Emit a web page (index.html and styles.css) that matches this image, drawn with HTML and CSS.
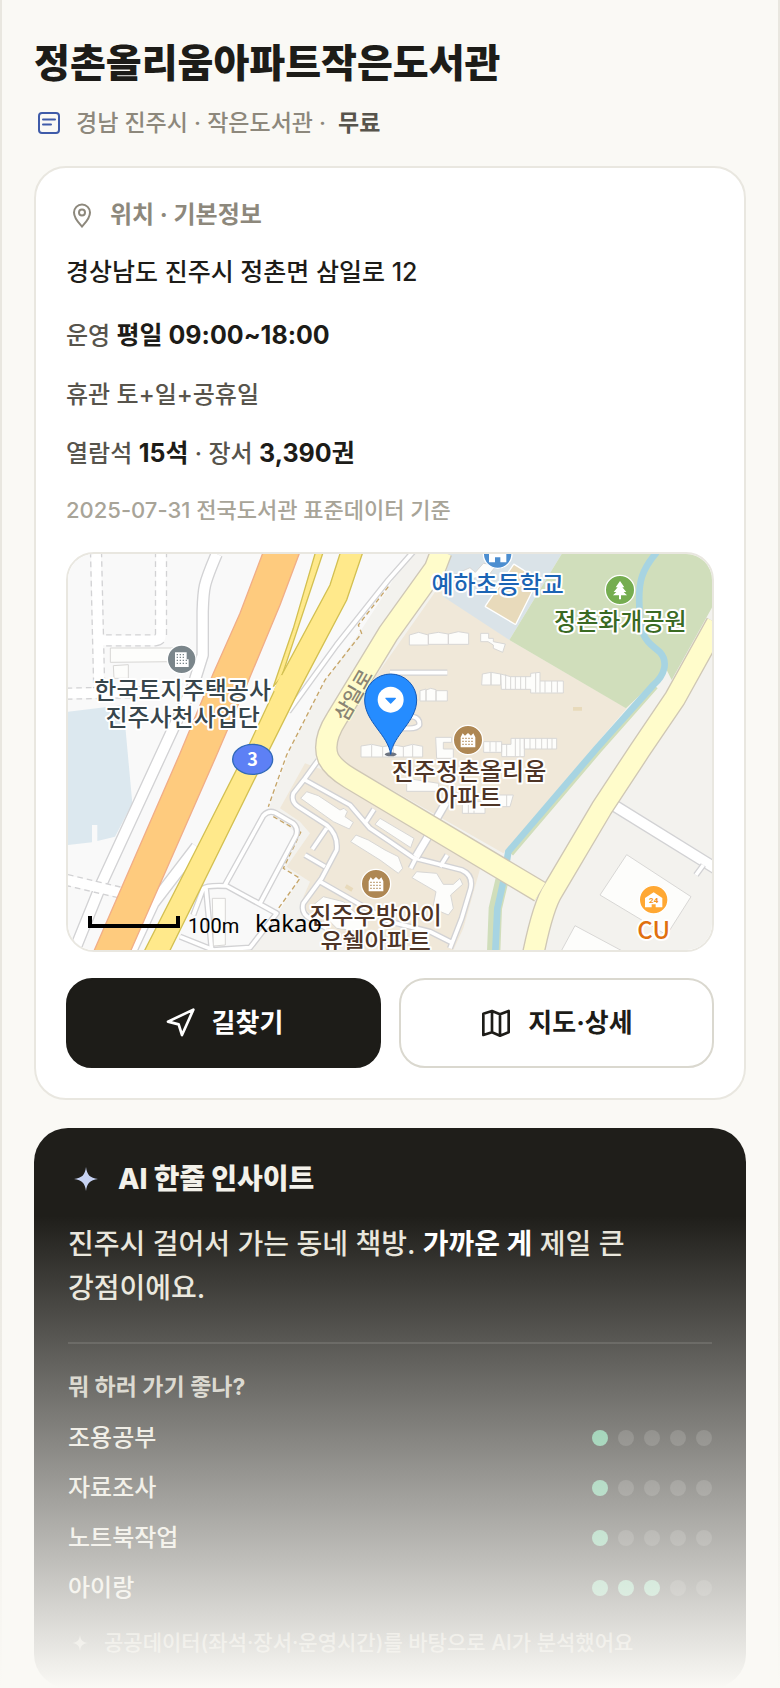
FILE: index.html
```html
<!DOCTYPE html>
<html lang="ko">
<head>
<meta charset="utf-8">
<meta name="viewport" content="width=device-width, initial-scale=1">
<title>정촌올리움아파트작은도서관</title>
<link rel="stylesheet" href="styles.css">
</head>
<body>
<main class="page">
  <header class="intro">
    <h1 class="title">정촌올리움아파트작은도서관</h1>
    <p class="meta">
      <svg class="icon-meta" viewBox="0 0 30 30" aria-hidden="true"><rect x="5" y="5" width="20" height="20" rx="3"/><path d="M9 11.500h12M9 16.500h8"/></svg>
      <span>경남 진주시 · 작은도서관 ·</span>
      <strong class="fee">무료</strong>
    </p>
  </header>

  <section class="card">
    <h2 class="card-heading">
      <svg class="icon-pin" viewBox="0 0 32 32" aria-hidden="true"><path d="M16 27.500C13 24 8 19.500 8 13.500a8 8 0 0 1 16 0c0 6-5 10.500-8 14Z"/><circle cx="16" cy="13.500" r="3"/></svg>
      <span>위치 · 기본정보</span>
    </h2>
    <p class="address">경상남도 진주시 정촌면 삼일로 12</p>
    <p class="fact">운영 <b>평일 09:00~18:00</b></p>
    <p class="fact">휴관 토+일+공휴일</p>
    <p class="fact">열람석 <b>15석</b> · 장서 <b>3,390권</b></p>
    <p class="source">2025-07-31 전국도서관 표준데이터 기준</p>

    <div class="map">
      <svg class="map-art" viewBox="24 27 1932 1188" preserveAspectRatio="xMidYMid slice" role="img" aria-label="도서관 주변 지도">
        <rect class="land" x="24" y="27" width="1932" height="1188"/>
        <path class="land-warm" d="M1040 27H1960V1215H560L650 1110 720 1000 670 970 720 870 640 815 628 785 690 615 800 400 900 260 985 130Z"/>
        <path class="water-flat" d="M24 500 190 480 217 775 165 875 112 888V840H96V892L24 900Z"/>
        <path class="block" d="M1140 120 1348 285 1700 490 1330 925 830 640 830 560Z"/>
        <path class="block" d="M735 655 660 790 720 830 750 865 680 965 750 1010 720 1080 880 1215H1180L1210 1150 1262 965 830 690Z"/>
        <path class="school" d="M1165 27H1505L1348 285 1150 155Z"/>
        <path class="park" d="M1505 27 1348 285 1698 490 1820 375 1835 405 1960 180V27Z"/>
        <path class="bank" d="M1784 422 1614 614 1350 924"/>
        <path class="bank lower" d="M1338 960 1325 1010 1306 1090 1301 1220"/>
        <path class="river" d="M1790 22C1745 75 1735 110 1738 180 1740 290 1765 290 1800 322 1825 350 1815 390 1780 420L1610 610 1345 920 1330 1010 1312 1090 1306 1220"/>

        <g class="field"><path d="M1362 60 1432 104 1366 236 1278 184Z"/></g>

        <g class="street-case wide">
          <path d="M470 27C430 120 430 130 428 200V330L400 420 305 625 125 1015 42 1220"/>
          <path d="M410 905 280 1075 215 1215"/>
          <path d="M1660 780 1970 972"/>
        </g>
        <g class="street wide">
          <path d="M470 27C430 120 430 130 428 200V330L400 420 305 625 125 1015 42 1220"/>
          <path d="M410 905 280 1075 215 1215"/>
          <path d="M1660 780 1970 972"/>
        </g>
        <g class="dash-case">
          <path d="M108 20 118 445M303 20V268Q303 285 286 286H130M20 446 300 440M20 1005 190 1045"/>
        </g>
        <g class="dash-gap">
          <path d="M108 20 118 445M303 20V268Q303 285 286 286H114M20 446 300 440M20 1005 190 1045"/>
        </g>
        <path class="trail" d="M985 125 895 240 905 265 795 405 680 630 655 700 625 785M640 815 722 862 670 970 720 1000 645 1105"/>

        <g class="street-case">
          <path d="M1060 20 985 105 830 300 685 500M495 1020 610 812Q625 795 645 803L700 835Q716 850 708 872L600 1075M400 1110 430 1030Q440 1020 500 1023L650 1105 570 1208 458 1215M438 1030 455 1215M360 1175 460 1215"/>
          <path d="M775 645 735 700 700 745Q692 770 715 785L800 840Q835 870 830 915L785 1000 730 1075Q722 1105 750 1120L800 1150M735 705 870 780 930 850 990 890 1060 938 1205 975Q1240 990 1232 1030L1205 1120 1170 1210M915 835 942 793M800 850 757 913M735 930 795 965M780 1010 990 1130 1110 1160 1180 1195M1052 970 1070 935M1140 965 1162 930M1908 990 1930 960M990 383H1162M1000 515H1060Q1080 520 1078 540 1070 550 1050 550H1020"/>
        </g>
        <g class="street">
          <path d="M1060 20 985 105 830 300 685 500M495 1020 610 812Q625 795 645 803L700 835Q716 850 708 872L600 1075M400 1110 430 1030Q440 1020 500 1023L650 1105 570 1208 458 1215M438 1030 455 1215M360 1175 460 1215"/>
          <path d="M775 645 735 700 700 745Q692 770 715 785L800 840Q835 870 830 915L785 1000 730 1075Q722 1105 750 1120L800 1150M735 705 870 780 930 850 990 890 1060 938 1205 975Q1240 990 1232 1030L1205 1120 1170 1210M915 835 942 793M800 850 757 913M735 930 795 965M780 1010 990 1130 1110 1160 1180 1195M1052 970 1070 935M1140 965 1162 930M1908 990 1930 960M990 383H1162M1000 515H1060Q1080 520 1078 540 1070 550 1050 550H1020"/>
        </g>
        <path class="street-case lane" d="M1068 935 1110 865M1130 820 1158 772"/>
        <path class="street lane" d="M1068 935 1110 865M1130 820 1158 772"/>

        <path class="main-case" d="M1144 20 1125 70 985 265 830 520Q785 590 805 640 820 670 870 700L1440 1040M1970 235 1845 460 1740 615 1625 790 1480 1035Q1450 1080 1420 1225"/>
        <path class="main-road" d="M1144 20 1125 70 985 265 830 520Q785 590 805 640 820 670 870 700L1440 1040M1970 235 1845 460 1740 615 1625 790 1480 1035Q1450 1080 1420 1225"/>

        <path class="highway" d="M610 20H720L660 180 560 420 470 630 211 1220H101L358 630 460 385 540 205Z"/>
        <path class="route" d="M767 20 700 250 640 425 665 395 790 20Z"/>
        <path class="route" d="M842 20H909L860 165 715 440 590 690 328 1220H252L415 900 567 600 665 390 810 120Z"/>
        <path class="route-join" d="M668 392 646 440"/>

        <g class="building">
          <path d="M151 309H340V350L151 352ZM160 362 205 359V400H162Z"/>
          <path d="M457 1060H496V1200L460 1203Z"/>
          <path d="M1048 270 1076 262 1105 270V300H1048ZM1105 267 1135 262 1165 267V298H1105ZM1165 267 1195 260 1226 265V298H1165Z"/>
          <path d="M1262 265H1286V280H1300V290L1336 297 1328 322 1300 310V300L1284 290H1262Z"/>
          <path d="M1267 387 1293 382V420H1265ZM1293 382 1322 387V420H1293ZM1322 387 1352 395H1412V385L1440 382V408H1510V444H1412V433H1324Z"/>
          <path d="M1337 388V433M1352 395V433M1366 395V433M1382 395V433M1397 395V433M1427 384V443M1440 408V443M1455 408V443M1475 408V443M1492 408V443"/>
          <path d="M1080 437 1098 432V468H1080ZM1098 435 1112 430 1128 434V468H1098ZM1128 437H1162V468H1128Z"/>
          <path d="M903 603 935 598 968 605 1000 600 1030 605 1058 598 1088 604V636H903ZM935 600V636M968 605V636M1000 600V636M1030 604V636M1058 600V636"/>
          <path d="M1127 577H1175V592H1150V612H1180V640H1130ZM1271 590H1325V622H1271ZM1325 598H1353V580H1393V635H1325ZM1393 580H1490V612H1393ZM1290 590V620M1308 590V620M1340 598V634M1366 580V634M1380 580V634M1410 580V612M1427 580V612M1445 580V612M1462 580V612M1476 580V612"/>
          <path d="M1040 700 1136 715V739H1040ZM1207 770H1275V805H1207ZM1275 750H1360L1350 785H1275ZM1225 770V805M1242 770V805M1340 750V785"/>
          <path d="M722 760 740 740 775 752 840 795 852 790 862 800 855 815 880 832 868 852 820 830Z"/>
          <path d="M872 890 888 870 925 885 975 915 1015 935 1028 970 1015 985 960 945Z"/>
          <path d="M945 838 960 820 1062 880 1052 908Z"/>
          <path d="M1056 998 1070 980 1130 985 1150 1018 1180 1018 1200 1000 1208 1018 1172 1050 1180 1090 1165 1110 1118 1090 1128 1040Z"/>
          <path d="M760 1080 790 1055 850 1070 915 1130 905 1160 830 1150Z"/>
          <path d="M1700 929 1893 1055 1820 1170 1620 1050ZM1545 1142 1700 1225H1500Z"/>
          <path d="M1180 90 1230 68 1246 82 1270 55 1310 60 1285 92 1240 100Z"/>
        </g>
        <path class="sand" d="M1539 486h27v11h-27zM860 1018l20 12-6 10-20-12z"/>

        <g class="badge slate" transform="translate(365 343)"><circle r="43"/><path d="M-20-21h35v21h6v23h-41z"/><path class="cut" d="M-15-14h25M-15-6h25M-15 3h31M-15 12h31" /></g>
        <g class="badge brown" transform="translate(1224 585)"><circle r="44"/><path d="M-22-8l6-12 7 7 9-8 9 8 7-7 6 12v30h-44z"/><path class="cut" d="M-17-5h34M-17 4h34M-17 13h34"/></g>
        <g class="badge brown" transform="translate(948 1017)"><circle r="44"/><path d="M-22-8l6-12 7 7 9-8 9 8 7-7 6 12v30h-44z"/><path class="cut" d="M-17-5h34M-17 4h34M-17 13h34"/></g>
        <g class="badge blue" transform="translate(1313 27)"><circle r="43"/><path d="M-26-4 0-22 26-4V25H8V10H-8V25H-26Z"/></g>
        <g class="badge green" transform="translate(1680 135)"><circle r="44"/><path d="M0-27-13-8h6l-12 14h8l-10 10H-3v12h6V16H21L11 6h8L7-8h6z"/></g>
        <g class="badge amber" transform="translate(1781 1064)"><circle r="43"/><path d="M-26-5 0-22 26-5V23H6V14H-6V23H-26Z"/><text class="badge-text" y="9">24</text></g>

        <ellipse class="shield" cx="578" cy="643" rx="60" ry="45"/>
        <text class="shield-text" x="578" y="662">3</text>
        <text class="road-name" transform="translate(880 450) rotate(-60)" y="22">삼일로</text>

        <g class="label">
          <text class="slate-text" x="368" y="463">한국토지주택공사</text>
          <text class="slate-text" x="368" y="543">진주사천사업단</text>
          <text class="blue-text" x="1313" y="145">예하초등학교</text>
          <text class="green-text" x="1681" y="256">정촌화개공원</text>
          <text class="brown-text" x="1227" y="704">진주정촌올리움</text>
          <text class="brown-text" x="1225" y="782">아파트</text>
          <text class="brown-text" x="947" y="1138">진주우방아이</text>
          <text class="brown-text" x="947" y="1216">유쉘아파트</text>
          <text class="orange-text" x="1781" y="1182">CU</text>
        </g>

        <ellipse class="pin-shadow" cx="992" cy="628" rx="18" ry="6"/>
        <path class="pin" d="M992 628C985 570 914 530 914 465a78 78 0 0 1 156 0C1070 530 999 570 992 628Z"/>
        <circle class="pin-hole" cx="992" cy="464" r="39"/>
        <path class="pin-mark" d="M978 460H1006L992 474Z"/>

        <path class="scale-bar" d="M90 1113V1143H354V1113"/>
        <text class="scale-text" x="384" y="1165">100m</text>
        <text class="brand-text" x="585" y="1160">kakao</text>
      </svg>
    </div>

    <div class="actions">
      <button class="button button-dark" type="button">
        <svg class="icon-button" viewBox="0 0 24 24" aria-hidden="true"><path d="M3 11 22 2 13.500 21 11 13Z"/></svg>
        길찾기
      </button>
      <button class="button button-light" type="button">
        <svg class="icon-button" viewBox="0 0 24 24" aria-hidden="true"><path d="M2.500 5 9 3l6 2.500L21.500 3v16L15 21.500 9 19l-6.500 2ZM9 3v16M15 5.500v16"/></svg>
        지도·상세
      </button>
    </div>
  </section>

  <section class="insight">
    <h2 class="insight-heading">
      <svg class="icon-star" viewBox="0 0 36 36" aria-hidden="true"><path d="M18 6C19 14 22 17 30 18 22 19 19 22 18 30 17 22 14 19 6 18 14 17 17 14 18 6Z"/></svg>
      <span>AI 한줄 인사이트</span>
    </h2>
    <p class="insight-text">진주시 걸어서 가는 동네 책방. <b>가까운 게</b> 제일 큰 강점이에요.</p>
    <h3 class="uses-heading">뭐 하러 가기 좋나?</h3>
    <ul class="uses">
      <li class="use"><span>조용공부</span><span class="dots" role="img" aria-label="5점 중 1점"><i class="dot on"></i><i class="dot"></i><i class="dot"></i><i class="dot"></i><i class="dot"></i></span></li>
      <li class="use"><span>자료조사</span><span class="dots" role="img" aria-label="5점 중 1점"><i class="dot on"></i><i class="dot"></i><i class="dot"></i><i class="dot"></i><i class="dot"></i></span></li>
      <li class="use"><span>노트북작업</span><span class="dots" role="img" aria-label="5점 중 1점"><i class="dot on"></i><i class="dot"></i><i class="dot"></i><i class="dot"></i><i class="dot"></i></span></li>
      <li class="use"><span>아이랑</span><span class="dots" role="img" aria-label="5점 중 3점"><i class="dot on"></i><i class="dot on"></i><i class="dot on"></i><i class="dot"></i><i class="dot"></i></span></li>
    </ul>
    <p class="note">
      <svg class="icon-note" viewBox="0 0 36 36" aria-hidden="true"><path d="M18 6C19 14 22 17 30 18 22 19 19 22 18 30 17 22 14 19 6 18 14 17 17 14 18 6Z"/></svg>
      <span>공공데이터(좌석·장서·운영시간)를 바탕으로 AI가 분석했어요</span>
    </p>
  </section>
</main>
</body>
</html>
```
FILE: styles.css
```css
* { box-sizing: border-box; }

body {
  margin: 0;
  background: #faf9f5;
  color: #1d1c18;
  font-family: Inter, "Noto Sans CJK KR", sans-serif;
  font-weight: 500;
}

h1, h2, h3, p, ul { margin: 0; padding: 0; }
ul { list-style: none; }
b, strong { font-weight: 700; }
svg { display: block; flex: none; }

.page {
  position: relative;
  padding: 36px 32px 0;
  border: solid #e9e7e0;
  border-width: 0 2px;
}

/* Fades the insight card out towards the bottom of the preview */
.page::after {
  content: "";
  position: absolute;
  inset: auto -2px 0;
  height: 472px;
  background: linear-gradient(rgba(250, 249, 245, 0), #faf9f5);
  pointer-events: none;
}

.title { font-size: 39px; line-height: 54px; font-weight: 800; }

.meta {
  display: flex;
  align-items: center;
  gap: 12px;
  margin-top: 18px;
  font-size: 23px;
  line-height: 30px;
  color: #8d887c;
}
.icon-meta { width: 30px; height: 30px; fill: none; stroke: #3f5ba9; stroke-width: 2; stroke-linecap: round; }
.fee { color: #57544c; }

.card {
  margin-top: 28px;
  padding: 30px;
  border: 2px solid #e9e7e0;
  border-radius: 32px;
  background: #fff;
}
.card-heading {
  display: flex;
  align-items: center;
  gap: 12px;
  font-size: 24px;
  line-height: 34px;
  font-weight: 700;
  color: #8d887c;
}
.icon-pin { width: 32px; height: 32px; fill: none; stroke: #8d887c; stroke-width: 2; }
.address { margin-top: 20px; font-size: 25px; line-height: 40px; }
.fact { margin-top: 22px; font-size: 24px; line-height: 37px; color: #57544c; }
.address + .fact { margin-top: 25px; }
.fact b { font-size: 25px; line-height: 1; color: #1d1c18; }
.source { margin-top: 20px; font-size: 22px; line-height: 36px; color: #a8a498; }

.map {
  margin-top: 24px;
  overflow: hidden;
  border: 2px solid #e9e7e0;
  border-radius: 28px;
}
.map-art { width: 100%; height: auto; font-family: "Noto Sans CJK KR", sans-serif; }

.land { fill: #f9f9f9; }
.land-warm { fill: #f3f2ee; }
.water-flat { fill: #dce8ef; }
.block { fill: #f0e8d9; }
.school { fill: #dae3e8; }
.park { fill: #d0debb; }
.bank { fill: none; stroke: #d0debb; stroke-width: 24; }
.bank.lower { stroke-width: 40; }
.river { fill: none; stroke: #a7d4e2; stroke-width: 20; }
.field path { fill: #e8dabb; stroke: #fff; stroke-width: 8; paint-order: stroke; stroke-linejoin: round; }
.street-case, .street { fill: none; stroke: #d2d2d4; stroke-width: 19; stroke-linejoin: round; }
.street { stroke: #fff; stroke-width: 11; }
.street-case.wide, .wide.street-case { stroke-width: 38; }
.street.wide { stroke-width: 30; }
.street-case.lane { stroke-width: 28; }
.street.lane { stroke-width: 20; }
.dash-case { fill: none; stroke: #d2d2d4; stroke-width: 37; stroke-dasharray: 17 12; }
.dash-gap { fill: none; stroke: #fff; stroke-width: 29; }
.trail { fill: none; stroke: #c6a568; stroke-width: 4; stroke-dasharray: 14 9; }
.main-case { fill: none; stroke: #cfc7b5; stroke-width: 68; stroke-linejoin: round; }
.main-road { fill: none; stroke: #fffccb; stroke-width: 60; stroke-linejoin: round; }
.highway { fill: #fecb7e; stroke: #f1ae87; stroke-width: 4; }
.route { fill: #ffe98b; stroke: #d3c052; stroke-width: 4; }
.route-join { stroke: #ffe98b; stroke-width: 12; }
.building { fill: #fdfdfb; stroke: #d8d7d5; stroke-width: 3; }
.sand { fill: #e8dabb; }

.badge circle { stroke: #fff; stroke-width: 4; }
.badge path { fill: #fff; }
.badge .cut { fill: none; stroke-width: 4; stroke-dasharray: 4 5; }
.slate circle { fill: #7b868b; }
.slate .cut { stroke: #7b868b; }
.brown circle { fill: #ae8753; }
.brown .cut { stroke: #ae8753; }
.blue circle { fill: #4c8ed0; }
.green circle { fill: #75ad50; }
.amber circle { fill: #ffa833; }
.badge-text { fill: #f29420; font-family: Roboto, sans-serif; font-size: 24px; font-weight: 700; text-anchor: middle; }

.shield { fill: #5d80f5; stroke: #3169b8; stroke-width: 4; }
.shield-text { fill: #fff; font-size: 54px; font-weight: 700; text-anchor: middle; }
.road-name { fill: #8a8574; stroke: #fffccb; stroke-width: 6; paint-order: stroke; font-size: 60px; text-anchor: middle; }
.label { font-size: 72px; font-weight: 500; text-anchor: middle; stroke: #fff; stroke-width: 12; stroke-linejoin: round; paint-order: stroke; }
.slate-text { fill: #37454b; }
.blue-text { fill: #1b64b4; }
.green-text { fill: #3a6a23; }
.brown-text { fill: #4e3426; }
.orange-text { fill: #e0700f; }
.pin { fill: #258cff; stroke: #1259b8; stroke-width: 3; }
.pin-shadow { fill: #6d7480; }
.pin-hole { fill: #fff; }
.pin-mark { fill: #258cff; stroke: #258cff; stroke-width: 4; stroke-linejoin: round; }
.scale-bar { fill: none; stroke: #000; stroke-width: 12; }
.scale-text { font-family: Roboto, sans-serif; font-size: 60px; font-weight: 400; }
.brand-text { font-family: "Noto Sans", sans-serif; font-size: 72px; font-weight: 400; }

.actions {
  display: grid;
  grid-template-columns: 1fr 1fr;
  gap: 18px;
  margin-top: 26px;
}
.button {
  display: flex;
  align-items: center;
  justify-content: center;
  gap: 16px;
  min-height: 90px;
  padding: 0 16px;
  border: 2px solid #1d1c18;
  border-radius: 26px;
  font: inherit;
  font-size: 26px;
  line-height: 32px;
  font-weight: 700;
}
.button-dark { background: #1d1c18; color: #fff; }
.button-light { border-color: #dad8cf; background: #fff; color: #1d1c18; }
.icon-button { width: 32px; height: 32px; fill: none; stroke: currentColor; stroke-width: 2; stroke-linejoin: round; }

.insight {
  margin-top: 28px;
  padding: 33px 34px 28px;
  border-radius: 34px;
  background: #1f1e1a;
  color: #f3f1ea;
}
.insight-heading {
  display: flex;
  align-items: center;
  gap: 14px;
  font-size: 28px;
  line-height: 36px;
  font-weight: 800;
}
.icon-star { width: 36px; height: 36px; fill: #c6d2f2; }
.insight-text {
  margin-top: 25px;
  padding-bottom: 32px;
  border-bottom: 2px solid #383733;
  font-size: 28px;
  line-height: 44px;
  color: #e8e5db;
  word-break: keep-all;
}
.insight-text b { color: #fff; }
.uses-heading { margin-top: 26px; font-size: 23px; line-height: 34px; font-weight: 700; color: #cbc8bd; }
.uses { margin-top: 9px; }
.use {
  display: flex;
  align-items: center;
  justify-content: space-between;
  font-size: 24px;
  line-height: 50px;
  font-weight: 500;
  color: #e8e5db;
}
.dots { display: flex; gap: 10px; }
.dot { width: 16px; height: 16px; border-radius: 50%; background: #3f3e3a; }
.dot.on { background: #5fb88c; }
.note {
  display: flex;
  align-items: center;
  gap: 12px;
  margin-top: 13px;
  font-size: 21px;
  line-height: 34px;
  color: #a8a498;
}
.icon-note { width: 24px; height: 24px; fill: #a8a498; }
```
